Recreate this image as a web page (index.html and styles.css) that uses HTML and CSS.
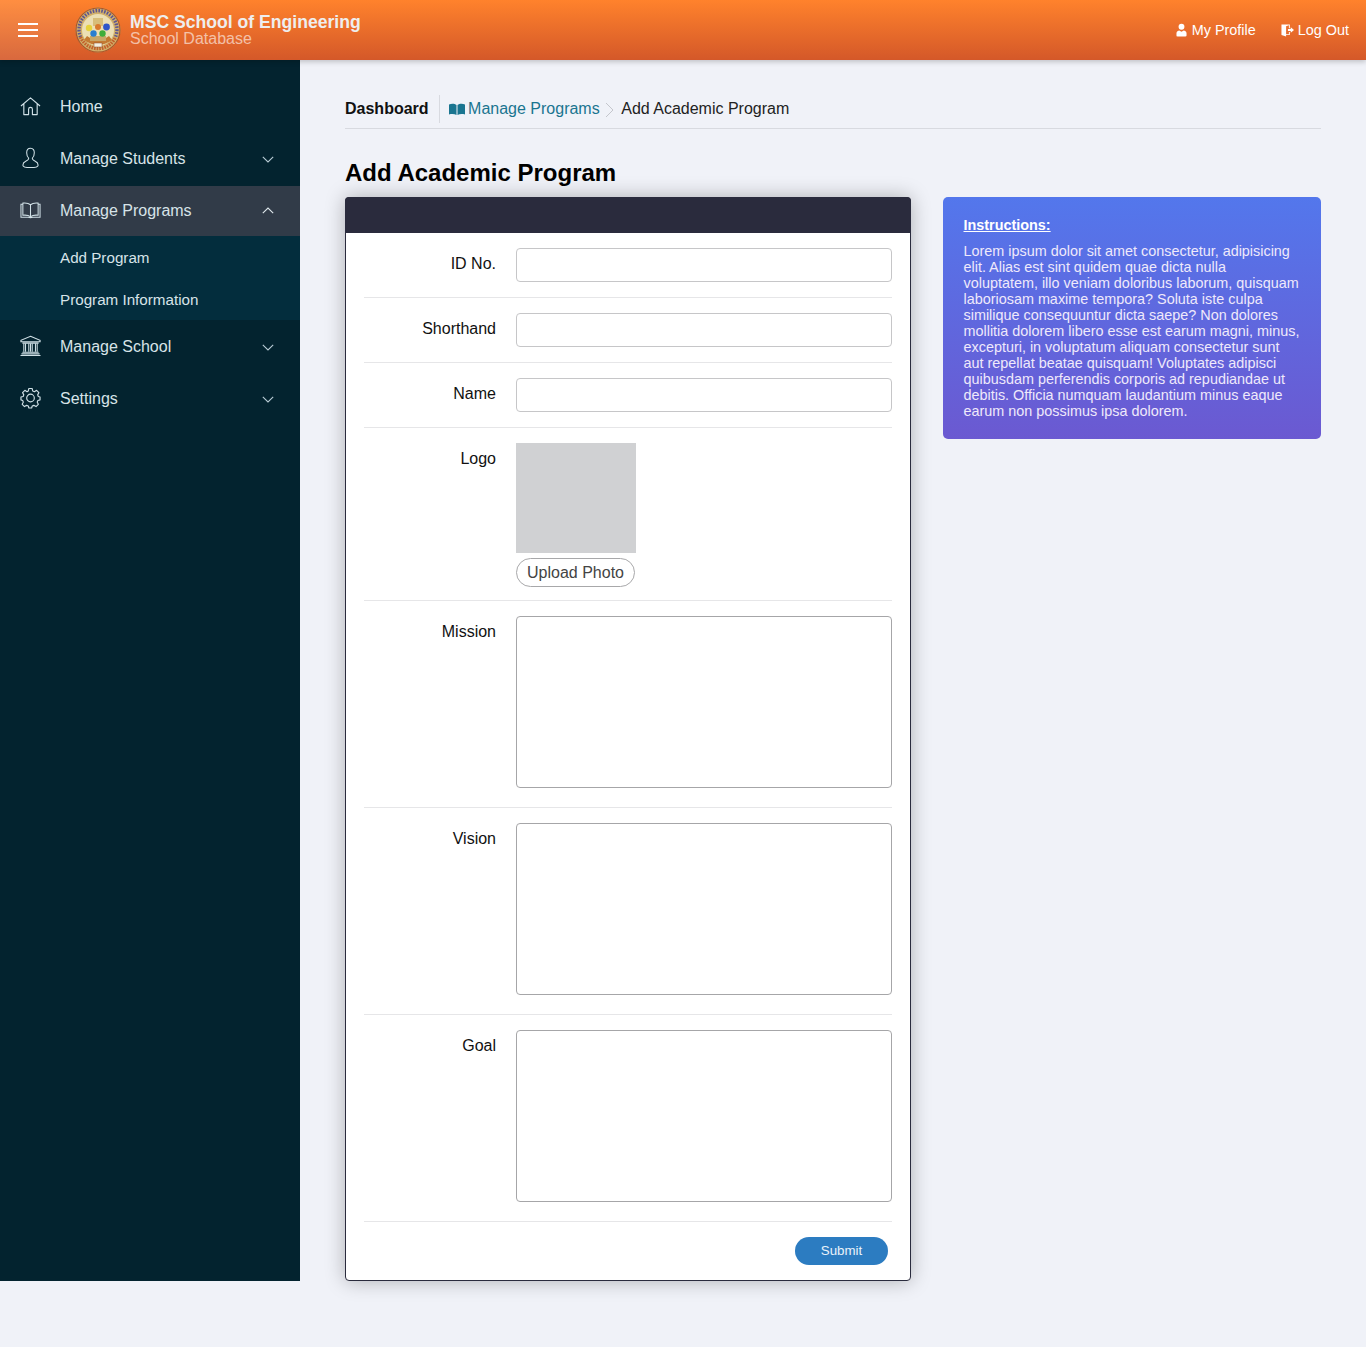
FILE: index.html
```html
<!DOCTYPE html>
<html lang="en">
<head>
<meta charset="utf-8">
<title>Add Academic Program</title>
<link rel="stylesheet" href="styles.css">
</head>
<body>
<header class="topbar">
  <button class="menu-btn" aria-label="Menu"><span></span><span></span><span></span></button>
  <div class="brand">
    <svg class="logo" viewBox="0 0 46 46" width="46" height="46">
      <circle cx="23" cy="23" r="22.5" fill="#d2b06a"/>
      <path d="M5.500 30A19 19 0 1 1 40.500 30" fill="none" stroke="#5d5590" stroke-width="3.400" stroke-dasharray="1.600 1.300"/>
      <path d="M5.500 30A19 19 0 0 0 40.500 30" fill="none" stroke="#c2602c" stroke-width="3.400" stroke-dasharray="1.600 1"/>
      <circle cx="23" cy="23" r="22" fill="none" stroke="#a8562a" stroke-width="1.200"/>
      <circle cx="23" cy="23" r="16" fill="#ecdfb4"/>
      <path d="M9 33 Q23 43 37 33 L34 29 Q23 37 12 29Z" fill="#c47a32"/>
      <rect x="18" y="11" width="10" height="8" fill="#d8bd78"/>
      <rect x="15" y="29" width="16" height="5" fill="#c8a868"/>
      <rect x="19" y="36" width="8" height="4" fill="#f3efe0" stroke="#8a4a26" stroke-width=".5"/>
      <circle cx="14" cy="21" r="3.200" fill="#e6d23c"/>
      <circle cx="23" cy="20" r="3" fill="#d97a2c"/>
      <circle cx="31.500" cy="20" r="3.400" fill="#2f55c8"/>
      <circle cx="18.500" cy="26.500" r="3.200" fill="#2a7fd0"/>
      <circle cx="27.500" cy="26.500" r="3.200" fill="#3fae3a"/>
    </svg>
    <div class="brand-text">
      <div class="brand-name">MSC School of Engineering</div>
      <div class="brand-sub">School Database</div>
    </div>
  </div>
  <nav class="top-links">
    <a class="top-link" href="#">
      <svg viewBox="0 0 12 14" width="11" height="14"><circle cx="6" cy="3.500" r="3.200" fill="#fff"/><path d="M.5 13V10.500C.5 8.500 2.500 7.500 3.500 7.500L6 9 8.500 7.500C9.500 7.500 11.500 8.500 11.500 10.500V13C11.500 13.600 11 14 10.500 14H1.500C1 14 .5 13.600 .5 13Z" fill="#fff"/></svg>
      My Profile
    </a>
    <a class="top-link top-link-out" href="#">
      <svg viewBox="0 0 14 14" width="13" height="14"><path d="M.5 1H9.500V5.200H8.500V2L5.500 3V11.500H8.500V9.200H9.500V12.500H5.500V14L.5 12.500Z" fill="#fff"/><path d="M7.500 6H10.500V4L14 7 10.500 10V8H7.500Z" fill="#fff"/></svg>
      Log Out
    </a>
  </nav>
</header>

<div class="layout">
  <aside class="sidebar">
    <a class="nav-item" href="#">
      <svg class="nav-icon" viewBox="0 0 22 20"><path d="M1 10 11 1.500 21 10M4 8V19H9V13.500A2 2 0 0 1 13 13.500V19H18V8" fill="none" stroke="currentColor" stroke-width="1.200" stroke-linejoin="round"/></svg>
      <span class="nav-label">Home</span>
    </a>
    <a class="nav-item" href="#">
      <svg class="nav-icon" viewBox="0 0 22 22"><path d="M11 .8C8 .8 7 3 7 5.500 7 8 8 10 9 11 9.500 12.500 8 13.500 6 14.500 4 15.500 3 16.500 3 18.500 3 20 5 21 11 21S19 20 19 18.500C19 16.500 18 15.500 16 14.500 14 13.500 12.500 12.500 13 11 14 10 15 8 15 5.500 15 3 14 .8 11 .8Z" fill="none" stroke="currentColor" stroke-width="1.100"/></svg>
      <span class="nav-label">Manage Students</span>
      <svg class="chev" viewBox="0 0 12 7"><path d="M.8 .8 6 6 11.200 .8" fill="none" stroke="currentColor" stroke-width="1.100"/></svg>
    </a>
    <a class="nav-item active" href="#">
      <svg class="nav-icon" viewBox="0 0 22 18"><path d="M11 3.500C9 1.800 6 1.500 3 1.800V14.500C6 14.200 9 14.500 11 16 13 14.500 16 14.200 19 14.500V1.800C16 1.500 13 1.800 11 3.500ZM11 3.500V16M3 3H1V16.500H8.500L11 17 13.500 16.500H21V3H19" fill="none" stroke="currentColor" stroke-width="1.100"/></svg>
      <span class="nav-label">Manage Programs</span>
      <svg class="chev chev-up" viewBox="0 0 12 7"><path d="M.8 6.200 6 1 11.200 6.200" fill="none" stroke="currentColor" stroke-width="1.100"/></svg>
    </a>
    <div class="submenu">
      <a class="sub-item" href="#">Add Program</a>
      <a class="sub-item" href="#">Program Information</a>
    </div>
    <a class="nav-item" href="#">
      <svg class="nav-icon" viewBox="0 0 22 22"><path d="M11 .8 21 5V6.500H1V5ZM2.500 8H19.500M2.500 17.500H19.500M1.500 19.300H20.500M.5 21H21.500" fill="none" stroke="currentColor" stroke-width="1.200"/><path d="M4 8.500V17M5.800 8.500V17M9.200 8.500V17M11 8.500V17M12.800 8.500V17M16.200 8.500V17M18 8.500V17" fill="none" stroke="currentColor" stroke-width="1.100"/></svg>
      <span class="nav-label">Manage School</span>
      <svg class="chev" viewBox="0 0 12 7"><path d="M.8 .8 6 6 11.200 .8" fill="none" stroke="currentColor" stroke-width="1.100"/></svg>
    </a>
    <a class="nav-item" href="#">
      <svg class="nav-icon" viewBox="0 0 22 22"><circle cx="11" cy="11" r="4" fill="none" stroke="currentColor" stroke-width="1.200"/><path d="M9.300 1H12.700L13.300 3.600 15.100 4.400 17.400 3 19.800 5.400 18.500 7.700 19.200 9.400 21 10V13L18.700 13.600 18 15.300 19.200 17.600 16.800 20 14.500 18.700 12.800 19.400 12.200 21.500H9.300L8.700 19.400 7 18.700 4.700 20 2.300 17.600 3.500 15.300 2.800 13.600 1 13V10L3.300 9.400 4 7.700 2.700 5.400 5.100 3 7.400 4.400 8.700 3.600Z" fill="none" stroke="currentColor" stroke-width="1.200" stroke-linejoin="round"/></svg>
      <span class="nav-label">Settings</span>
      <svg class="chev" viewBox="0 0 12 7"><path d="M.8 .8 6 6 11.200 .8" fill="none" stroke="currentColor" stroke-width="1.100"/></svg>
    </a>
  </aside>

  <main class="content">
    <div class="crumbs">
      <strong class="crumb-root">Dashboard</strong>
      <a class="crumb-link" href="#">
        <svg viewBox="0 0 16 12" width="16" height="12"><path d="M0 1.500C2.500 .5 5.500 .5 7.500 2V12C5.500 10.800 2.500 10.800 0 11.500ZM16 1.500C13.500 .5 10.500 .5 8.500 2V12C10.500 10.800 13.500 10.800 16 11.500Z" fill="#1a7590"/></svg>
        Manage Programs
      </a>
      <svg class="crumb-sep" viewBox="0 0 9 16" width="9" height="16"><path d="M1 1 8 8 1 15" fill="none" stroke="#c4c6cc" stroke-width="1"/></svg>
      <span class="crumb-current">Add Academic Program</span>
    </div>
    <h1 class="page-title">Add Academic Program</h1>
    <div class="columns">
      <section class="card">
        <div class="card-head"></div>
        <form class="card-body">
          <div class="row"><label class="row-label">ID No.</label><div class="row-field"><input class="input" type="text"></div></div>
          <div class="row"><label class="row-label">Shorthand</label><div class="row-field"><input class="input" type="text"></div></div>
          <div class="row"><label class="row-label">Name</label><div class="row-field"><input class="input" type="text"></div></div>
          <div class="row row-logo"><label class="row-label">Logo</label><div class="row-field">
            <div class="photo"></div>
            <button class="upload" type="button">Upload Photo</button>
          </div></div>
          <div class="row row-area"><label class="row-label">Mission</label><div class="row-field"><textarea class="area"></textarea></div></div>
          <div class="row row-area"><label class="row-label">Vision</label><div class="row-field"><textarea class="area"></textarea></div></div>
          <div class="row row-area"><label class="row-label">Goal</label><div class="row-field"><textarea class="area"></textarea></div></div>
          <div class="actions"><button class="submit" type="button">Submit</button></div>
        </form>
      </section>
      <aside class="note">
        <div class="note-title">Instructions:</div>
        <p class="note-text">Lorem ipsum dolor sit amet consectetur, adipisicing elit. Alias est sint quidem quae dicta nulla voluptatem, illo veniam doloribus laborum, quisquam laboriosam maxime tempora? Soluta iste culpa similique consequuntur dicta saepe? Non dolores mollitia dolorem libero esse est earum magni, minus, excepturi, in voluptatum aliquam consectetur sunt aut repellat beatae quisquam! Voluptates adipisci quibusdam perferendis corporis ad repudiandae ut debitis. Officia numquam laudantium minus eaque earum non possimus ipsa dolorem.</p>
      </aside>
    </div>
  </main>
</div>
</body>
</html>
```
FILE: styles.css
```css
* { box-sizing: border-box; }
html, body { margin: 0; padding: 0; }
body {
  background: #f0f2f8;
  font-family: "Liberation Sans", Arial, sans-serif;
  color: #111;
  min-height: 1347px;
}
a { text-decoration: none; color: inherit; }

.topbar {
  position: relative;
  z-index: 2;
  height: 60px;
  display: flex;
  align-items: center;
  background: linear-gradient(#ff822c, #d45829);
  box-shadow: 0 2px 5px rgba(0, 0, 0, .2);
}
.menu-btn {
  width: 60px;
  height: 60px;
  padding: 0 4px 1px 0;
  border: 0;
  background: rgba(255, 255, 255, .1);
  display: flex;
  flex-direction: column;
  align-items: center;
  justify-content: center;
  gap: 4px;
}
.menu-btn span { display: block; width: 20px; height: 2px; background: #fff; }
.brand { display: flex; align-items: center; margin-left: 15px; }
.logo { display: block; margin-right: 9px; }
.brand-text { padding-top: 1px; }
.brand-name { font-size: 17.6px; font-weight: 700; line-height: 18px; color: #eee; }
.brand-sub { margin: -1px 0 1px; font-size: 16px; line-height: 17px; color: rgba(255, 255, 255, .6); }
.top-links { margin-left: auto; display: flex; gap: 25px; padding-right: 17px; }
.top-link { display: flex; align-items: center; gap: 5px; font-size: 14.4px; color: #fff; }
.top-link-out { gap: 4px; }

.layout { display: flex; align-items: stretch; margin-bottom: 66px; }
.sidebar {
  flex: 0 0 300px;
  background: #03232f;
  padding-top: 22px;
  color: #d7e3e8;
}
.nav-item {
  display: flex;
  align-items: center;
  height: 50px;
  margin-bottom: 2px;
  padding: 0 26px 0 20px;
  font-size: 16px;
}
.nav-item.active { background: #313b48; margin-bottom: 0; }
.nav-icon { width: 21px; height: 22px; margin: -3px 0 0 -0.5px; color: #d0e0e6; flex: none; }
.nav-label { margin-left: 19.5px; flex: 1; }
.chev { width: 12px; height: 7px; margin-top: 1px; color: #b8ccd5; flex: none; }
.chev-up { margin-top: -2px; color: #dfe8ec; }
.submenu { background: #032d3d; margin-bottom: 2px; }
.sub-item {
  display: flex;
  align-items: center;
  height: 42px;
  padding-left: 60px;
  font-size: 15.2px;
}

.content { flex: 1; padding: 35px 45px 0; min-width: 0; }
.crumbs {
  display: flex;
  align-items: center;
  height: 34px;
  padding-bottom: 6px;
  border-bottom: 1px solid #d8dae0;
  font-size: 16px;
}
.crumb-root {
  height: 28px;
  line-height: 28px;
  padding-right: 10px;
  margin-right: 9.5px;
  border-right: 1px solid #d8dae0;
}
.crumb-link { display: flex; align-items: center; gap: 3px; color: #1a7590; }
.crumb-sep { margin: 2px 7px 0 5.5px; }
.crumb-current { color: #222; }
.page-title { margin: 30px 0 10px; font-size: 24px; line-height: 28px; font-weight: 700; color: #000; }

.columns { display: flex; align-items: flex-start; gap: 32px; }
.card {
  flex: 0 0 566px;
  background: #fff;
  border: 1px solid #2a2b3d;
  border-radius: 4px;
  box-shadow: 0 0 20px rgba(0, 0, 0, .28);
}
.card-head { height: 36px; margin: -1px -1px 0; background: #2a2b3d; border-radius: 4px 4px 0 0; }
.card-body { padding: 0 18px; }
.row {
  display: flex;
  padding: 15px 0;
  border-bottom: 1px solid #e6e6e8;
}
.row-logo { padding-bottom: 13px; }
.row-label {
  width: 132px;
  padding-top: 7px;
  text-align: right;
  font-size: 16px;
  line-height: 18px;
  color: #111;
}
.row-field { margin-left: 20px; flex: 1; min-width: 0; }
.input, .area {
  display: block;
  width: 100%;
  border: 1px solid #c6c6c8;
  border-radius: 4px;
  background: #fff;
  margin: 0;
}
.input { height: 34px; }
.area { height: 172px; margin-bottom: 4px; resize: none; border-color: #a6a6a8; }
.photo { width: 120px; height: 110px; background: #d0d1d3; }
.upload {
  display: block;
  margin-top: 5px;
  width: 119px;
  height: 29px;
  padding: 0;
  border: 1px solid #a8a8aa;
  border-radius: 15px;
  background: #fff;
  font: 16px "Liberation Sans", Arial, sans-serif;
  color: #444;
}
.actions { display: flex; justify-content: flex-end; padding: 15px 4px 15px 0; }
.submit {
  width: 93px;
  height: 28px;
  padding: 0 0 2px;
  border: 0;
  border-radius: 14px;
  background: #2c7cc1;
  color: #eaf2fa;
  font: 13.3px "Liberation Sans", Arial, sans-serif;
}

.note {
  flex: 0 0 378px;
  height: 242px;
  padding: 20px 20px 0 20.5px;
  border-radius: 5px;
  background: linear-gradient(#5377ec, #6b59d1);
  color: #efe9fb;
}
.note-title { font-size: 14.4px; line-height: 16px; font-weight: 700; text-decoration: underline; color: #fff; }
.note-text { margin: 10px 0 0; font-size: 14.4px; line-height: 16px; }
```
